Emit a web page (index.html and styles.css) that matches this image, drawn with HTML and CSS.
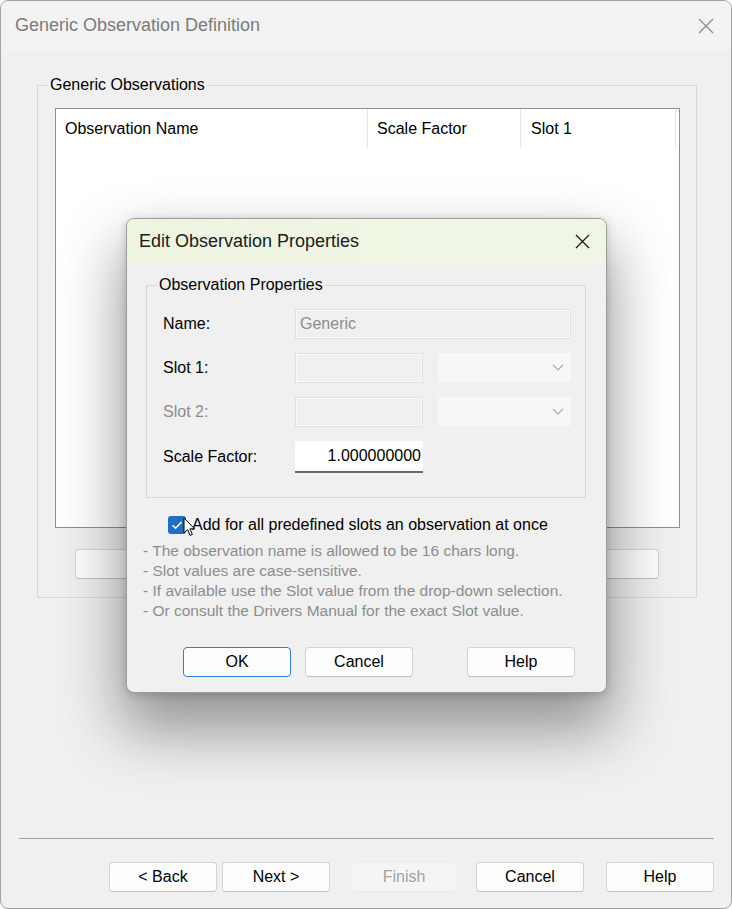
FILE: index.html
```html
<!DOCTYPE html>
<html lang="en">
<head>
  <meta charset="UTF-8">
  <title>Generic Observation Definition</title>
  <link rel="stylesheet" href="styles.css">
</head>
<body>
  <div class="window">
    <!-- title bar -->
    <div class="titlebar">
      <span class="title">Generic Observation Definition</span>
      <svg class="close" width="16" height="16" viewBox="0 0 16 16">
        <path d="M1 1 L15 15 M15 1 L1 15" stroke="#8a8a8a" stroke-width="1.2" fill="none"/>
      </svg>
    </div>

    <div class="page">
      <fieldset class="group outer-group">
        <legend>Generic Observations</legend>
        <div class="listview">
          <div class="list-header">
            <div class="col col-name">Observation Name</div>
            <div class="col col-scale">Scale Factor</div>
            <div class="col col-slot">Slot 1</div>
          </div>
        </div>
        <!-- buttons hidden behind the modal -->
        <div class="list-buttons">
          <button class="btn wide" aria-label="Add"></button>
          <button class="btn wide" aria-label="Delete"></button>
        </div>
      </fieldset>
    </div>

    <!-- wizard footer -->
    <div class="footer">
      <div class="separator"></div>
      <div class="wizard-buttons">
        <button class="btn">&lt; Back</button>
        <button class="btn next">Next &gt;</button>
        <button class="btn finish" disabled>Finish</button>
        <button class="btn cancel">Cancel</button>
        <button class="btn help">Help</button>
      </div>
    </div>

    <!-- modal dialog -->
    <div class="dialog">
      <div class="dialog-title">
        <span>Edit Observation Properties</span>
        <svg width="15" height="15" viewBox="0 0 15 15">
          <path d="M1 1 L14 14 M14 1 L1 14" stroke="#1a1a1a" stroke-width="1.3" fill="none"/>
        </svg>
      </div>
      <div class="dialog-body">
        <fieldset class="group props">
          <legend>Observation Properties</legend>
          <div class="form">
            <label>Name:</label>
            <div class="field disabled span2">Generic</div>

            <label>Slot 1:</label>
            <div class="field disabled"></div>
            <div class="combo">
              <svg width="12" height="7" viewBox="0 0 12 7"><path d="M1 1 L6 6 L11 1" stroke="#ababab" stroke-width="1.2" fill="none"/></svg>
            </div>

            <label class="muted">Slot 2:</label>
            <div class="field disabled"></div>
            <div class="combo">
              <svg width="12" height="7" viewBox="0 0 12 7"><path d="M1 1 L6 6 L11 1" stroke="#ababab" stroke-width="1.2" fill="none"/></svg>
            </div>

            <label>Scale Factor:</label>
            <div class="field value">1.000000000</div>
          </div>
        </fieldset>

        <div class="check-row">
          <span class="checkbox">
            <svg width="18" height="18" viewBox="0 0 18 18"><path d="M4.5 9.2 L7.6 12.2 L13.5 6" stroke="#fff" stroke-width="1.6" fill="none"/></svg>
            <svg class="cursor" width="13" height="20" viewBox="0 0 13 20">
              <path d="M1 1 L1 16 L4.6 12.6 L7.2 18.4 L9.4 17.4 L6.9 11.8 L11.6 11.8 Z" fill="#fff" stroke="#000" stroke-width="1"/>
            </svg>
          </span>
          <span>Add for all predefined slots an observation at once</span>
        </div>

        <div class="hints">
          <div>- The observation name is allowed to be 16 chars long.</div>
          <div>- Slot values are case-sensitive.</div>
          <div>- If available use the Slot value from the drop-down selection.</div>
          <div>- Or consult the Drivers Manual for the exact Slot value.</div>
        </div>

        <div class="dialog-buttons">
          <button class="btn default">OK</button>
          <button class="btn">Cancel</button>
          <button class="btn help-btn">Help</button>
        </div>
      </div>
    </div>
  </div>
</body>
</html>
```

FILE: styles.css
```css
body {
  margin: 0;
  background: #fff;
  font-family: "Liberation Sans", Arial, sans-serif;
  font-size: 16px;
  color: #000;
}

/* outer wizard window */
.window {
  position: relative;
  width: 732px;
  height: 909px;
  box-sizing: border-box;
  border: 1px solid #a3a3a3;
  border-radius: 8px;
  background: #f0f0f0;
  display: flex;
  flex-direction: column;
  overflow: hidden;
}

.titlebar {
  height: 49px;
  flex: none;
  display: flex;
  align-items: center;
  justify-content: space-between;
  padding: 0 17px 0 14px;
  background: #f3f3f3;
}

.title {
  font-size: 18px;
  color: #7b7b7b;
}

.page {
  padding: 25px 34px 0 36px;
}

/* group boxes */
.group {
  margin: 0;
  border: 1px solid #d9d9d9;
  min-width: 0;
}

.group legend {
  padding: 0 2px;
  line-height: 20px;
}

.outer-group {
  padding: 13px 16px 18px 17px;
}

.outer-group legend {
  margin-left: -7px;
}

.listview {
  height: 420px;
  box-sizing: border-box;
  border: 1px solid #8f8f8f;
  background: #fff;
}

.list-header {
  display: flex;
  height: 39px;
}

.col {
  box-sizing: border-box;
  border-right: 1px solid #e5e5e5;
  line-height: 39px;
  padding-left: 9px;
}

.col-name { width: 312px; }
.col-scale { width: 153px; }
.col-slot { width: 155px; padding-left: 10px; }

.list-buttons {
  display: flex;
  justify-content: space-between;
  margin-top: 21px;
  padding: 0 21px 0 20px;
}

/* buttons */
.btn {
  height: 30px;
  width: 108px;
  box-sizing: border-box;
  padding: 0;
  border: 1px solid #d3d3d3;
  border-bottom-color: #c0c0c0;
  border-radius: 4px;
  background: #fdfdfd;
  font-family: "Liberation Sans", Arial, sans-serif;
  font-size: 16px;
  color: #000;
}

.btn.wide { width: 220px; }

.btn.finish {
  background: #f5f5f5;
  border-color: #ebebeb;
  color: #a3a3a3;
}

.footer {
  margin-top: auto;
}

.separator {
  margin: 0 17px 0 18px;
  border-top: 1px solid #a0a0a0;
}

.wizard-buttons {
  display: flex;
  justify-content: flex-end;
  padding: 23px 17px 16px 0;
}

.wizard-buttons .next { margin-left: 5px; }
.wizard-buttons .finish { margin-left: 20px; }
.wizard-buttons .cancel { margin-left: 18px; }
.wizard-buttons .help { margin-left: 22px; }

/* modal dialog */
.dialog {
  position: absolute;
  left: 125px;
  top: 217px;
  width: 481px;
  box-sizing: border-box;
  border: 1px solid #9c9c9c;
  border-radius: 8px;
  background: #f0f0f0;
  overflow: hidden;
  box-shadow: 0 32px 60px 6px rgba(0, 0, 0, 0.38), 0 2px 10px rgba(0, 0, 0, 0.18);
}

.dialog-title {
  height: 45px;
  display: flex;
  align-items: center;
  justify-content: space-between;
  padding: 0 16px 0 12px;
  background: linear-gradient(90deg, #edf5e1, #f0f6e6);
  font-size: 18px;
  color: #1b1b1b;
}

.dialog-body {
  padding: 11px 20px 15px 19px;
}

.props {
  padding: 14px 14px 24px 16px;
}

.props legend {
  margin-left: -6px;
}

.form {
  display: grid;
  grid-template-columns: 117px 128px 133px;
  grid-template-rows: 30px 30px 30px 32px;
  column-gap: 15px;
  row-gap: 14px;
  align-items: center;
}

.form label { align-self: center; }
.form .muted { color: #8c8c8c; }

.field {
  height: 100%;
  box-sizing: border-box;
  display: flex;
  align-items: center;
  padding: 0 4px;
}

.field.disabled {
  background: #f0f0f0;
  border: 1px solid #e2e2e2;
  box-shadow: inset 0 0 0 1px #f9f9f9;
  color: #8d8d8d;
}

.span2 { grid-column: span 2; }

.field.value {
  background: #fff;
  border-bottom: 2px solid #6a6a6a;
  justify-content: flex-end;
  padding-right: 2px;
}

.combo {
  height: 29px;
  align-self: start;
  background: #f7f7f7;
  border-radius: 2px;
  display: flex;
  align-items: center;
  justify-content: flex-end;
  padding-right: 7px;
}

.check-row {
  display: flex;
  align-items: center;
  gap: 6px;
  margin-top: 18px;
  padding-left: 22px;
  line-height: 18px;
}

.checkbox {
  position: relative;
  width: 18px;
  height: 18px;
  border-radius: 3px;
  background: #1f6fc5;
}

.checkbox svg { display: block; }

.cursor {
  position: absolute;
  left: 15px;
  top: 1px;
}

.hints {
  margin: 7px 0 0 -3px;
  font-size: 15.5px;
  line-height: 20px;
  color: #8d8d8d;
}

.dialog-buttons {
  display: flex;
  gap: 14px;
  margin-top: 26px;
  padding-left: 37px;
}

.btn.default {
  border-color: #2b7fd6;
}

.dialog-buttons .help-btn {
  margin-left: 40px;
}
```
